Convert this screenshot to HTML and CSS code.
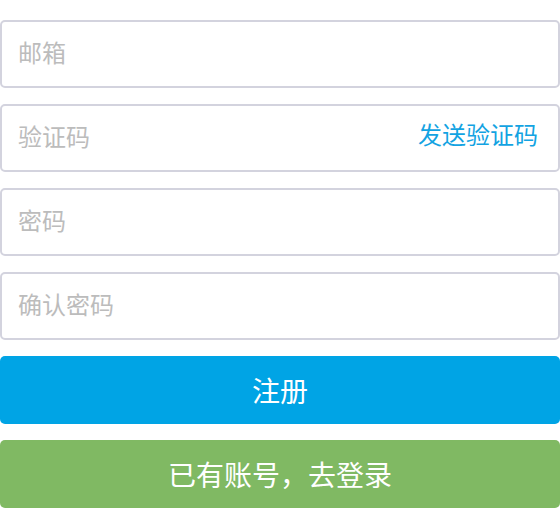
FILE: index.html
```html
<!DOCTYPE html>
<html lang="zh-CN">
<head>
    <meta charset="UTF-8">
    <meta name="viewport" content="width=device-width, initial-scale=1.0">
    <title>注册</title>
    <link rel="stylesheet" href="styles.css">
</head>
<body>
    <form class="register-form" onsubmit="return false;">
        <div class="field">
            <input type="text" placeholder="邮箱">
        </div>
        <div class="field">
            <input type="text" placeholder="验证码">
            <span class="send-code">发送验证码</span>
        </div>
        <div class="field">
            <input type="password" placeholder="密码">
        </div>
        <div class="field">
            <input type="password" placeholder="确认密码">
        </div>
        <button class="btn btn-register">注册</button>
        <button class="btn btn-login">已有账号，去登录</button>
    </form>
</body>
</html>
```

FILE: styles.css
```css
body {
    margin: 0;
    background: #ffffff;
    font-family: "Liberation Sans", "Noto Sans CJK SC", sans-serif;
}
.register-form {
    display: flex;
    flex-direction: column;
    gap: 16px;
    padding: 20px 0;
}
.field {
    display: flex;
    align-items: center;
    height: 68px;
    box-sizing: border-box;
    border: 2px solid #d3d3de;
    border-radius: 5px;
    padding: 0 20px 0 16px;
    background: #fff;
}
.field input {
    flex: 1;
    min-width: 0;
    border: none;
    outline: none;
    font-size: 24px;
    font-family: inherit;
    color: #333;
    padding: 0;
    background: transparent;
}
.field input::placeholder {
    color: #bcbcbc;
}
.send-code {
    display: block;
    font-size: 24px;
    line-height: 24px;
    margin-top: -4px;
    color: #13a3e2;
    cursor: pointer;
}
.btn {
    height: 68px;
    border: none;
    border-radius: 5px;
    color: #ffffff;
    font-size: 28px;
    font-family: inherit;
    cursor: pointer;
}
.btn-register {
    background: #00a4e5;
}
.btn-login {
    background: #80b963;
}
```
